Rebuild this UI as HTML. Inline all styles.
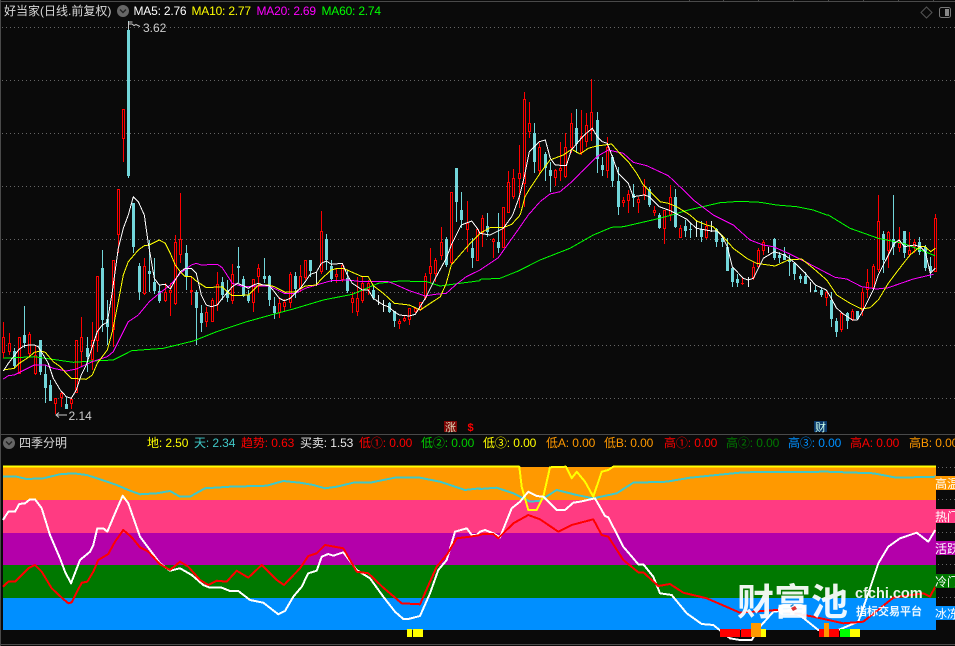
<!DOCTYPE html>
<html lang="zh"><head><meta charset="utf-8"><title>四季分明</title>
<style>
html,body{margin:0;padding:0;background:#0a0a0a;width:955px;height:646px;overflow:hidden}
svg{display:block;position:absolute;left:0;top:0}
text{font-family:"Liberation Sans","Noto Sans CJK SC",sans-serif;font-size:12px}
</style></head><body>
<svg id="s" width="955" height="646" viewBox="0 0 955 646" xmlns="http://www.w3.org/2000/svg">
<rect width="955" height="646" fill="#0a0a0a"/>
<g id="grid" stroke="#666" stroke-dasharray="1 3" shape-rendering="crispEdges">
<path d="M2 27.5H955M2 80.5H955M2 133.5H955M2 186.5H955M2 239.5H955M2 292.5H955M2 345.5H955M2 398.5H955"/>
<path d="M938 467.5H955M938 499.5H955M938 532.5H955M938 564.5H955M938 597.5H955"/>
</g>
<path d="M0 1.5H955M689.5 0V1M723.5 0V1M758.5 0V1M793.5 0V1M828.5 0V1M863.5 0V1M898.5 0V1M933.5 0V1M.5 0V646M0 434.5H955M0 644.5H955" stroke="#4a4a4a" fill="none" shape-rendering="crispEdges"/>
<g id="candles" shape-rendering="crispEdges"></g>
<g id="up" fill="none" stroke-width="1" shape-rendering="crispEdges"></g>

<text x="4" y="15" fill="#d8d8d8">好当家(日线.前复权)</text>
<circle cx="123" cy="11" r="6" fill="#666"/><path d="M120 9.5l3 3 3-3" stroke="#222" stroke-width="1.4" fill="none"/>
<g style="letter-spacing:-.2px">
<text x="133.5" y="15" fill="#fff">MA5: 2.76</text>
<text x="191.5" y="15" fill="#ff0">MA10: 2.77</text>
<text x="256.5" y="15" fill="#f0f">MA20: 2.69</text>
<text x="321.5" y="15" fill="#0f0">MA60: 2.74</text>
</g>
<path d="M926.5 7l5.500 5.500-5.500 5.500-5.500-5.500z" fill="none" stroke="#555"/>
<rect x="939.500" y="7.500" width="11" height="10" rx="2" fill="#0a0a0a" stroke="#777"/><rect x="945" y="9" width="4" height="7" fill="#888"/>
<path d="M128.500 29V22h4M129 24h3l2 1.500 2-1 4 2" stroke="#ccc" fill="none"/>
<text x="143" y="32" fill="#ccc">3.62</text>
<path d="M67 415H56M59 412.500l-3 2.500 3 2.500" stroke="#ccc" fill="none"/>
<text x="68.500" y="420" fill="#ccc">2.14</text>
<rect x="444" y="421" width="13" height="11" fill="#7d0505"/>
<text x="445" y="431" fill="#ddb" style="font-size:11px">涨</text>
<text x="467.500" y="431" fill="#f00" style="font-size:11px;font-weight:bold">$</text>
<rect x="814" y="421" width="13" height="11" fill="#0b3a6c"/>
<text x="815" y="431" fill="#cfe" style="font-size:11px">财</text>

<circle cx="9" cy="443" r="6" fill="#666"/><path d="M6 441.500l3 3 3-3" stroke="#222" stroke-width="1.400" fill="none"/>
<text x="19" y="447" fill="#d8d8d8">四季分明</text>
<text y="447" style="letter-spacing:-.1px">
<tspan x="147" fill="#ff0">地: 2.50</tspan>
<tspan x="194" fill="#40c8c8">天: 2.34</tspan>
<tspan x="241" fill="#f00">趋势: 0.63</tspan>
<tspan x="300" fill="#e8e8e8">买卖: 1.53</tspan>
<tspan x="359" fill="#f00">低①: 0.00</tspan>
<tspan x="421" fill="#0c0">低②: 0.00</tspan>
<tspan x="483" fill="#ff0">低③: 0.00</tspan>
<tspan x="546" fill="#f90">低A: 0.00</tspan>
<tspan x="604" fill="#f90">低B: 0.00</tspan>
<tspan x="664" fill="#f00">高①: 0.00</tspan>
<tspan x="726" fill="#007800">高②: 0.00</tspan>
<tspan x="788" fill="#0090ff">高③: 0.00</tspan>
<tspan x="850" fill="#f00">高A: 0.00</tspan>
<tspan x="909" fill="#f90">高B: 0.00</tspan>
</text>

<g shape-rendering="crispEdges">
<rect x="3" y="467" width="933" height="33" fill="#ff9900"/>
<rect x="3" y="500" width="933" height="33" fill="#ff3b82"/>
<rect x="3" y="533" width="933" height="32" fill="#b400aa"/>
<rect x="3" y="565" width="933" height="33" fill="#007800"/>
<rect x="3" y="598" width="933" height="32" fill="#008fff"/>
</g>
<g id="low" fill="none" stroke-width="2" stroke-linejoin="round" shape-rendering="crispEdges"></g>
<g shape-rendering="crispEdges">
<rect x="407" y="629" width="5" height="8" fill="#ff0"/><rect x="413" y="629" width="10" height="8" fill="#ff0"/>
<rect x="720" y="629" width="20" height="8" fill="#f00"/><rect x="741" y="629" width="10" height="8" fill="#f00"/>
<rect x="751" y="623" width="10" height="14" fill="#f90"/><rect x="761" y="629" width="5" height="8" fill="#ff0"/>
<rect x="819" y="629" width="5" height="8" fill="#f00"/><rect x="824" y="623" width="5" height="14" fill="#f90"/>
<rect x="829" y="629" width="10" height="8" fill="#f00"/><rect x="840" y="629" width="10" height="8" fill="#0f0"/><rect x="850" y="629" width="10" height="8" fill="#ff0"/>
</g>
<g shape-rendering="crispEdges">
<rect x="935" y="476" width="20" height="14" fill="#ff9900"/>
<rect x="935" y="509" width="20" height="14" fill="#ff3b82"/>
<rect x="935" y="541" width="20" height="14" fill="#b400aa"/>
<rect x="935" y="574" width="20" height="14" fill="#007800"/>
<rect x="935" y="606" width="20" height="14" fill="#008fff"/>
</g>
<g fill="#fff">
<text x="935" y="488">高温</text>
<text x="935" y="521">热门</text>
<text x="935" y="553">活跃</text>
<text x="935" y="586">冷门</text>
<text x="935" y="618">冰冻</text>
</g>
<g fill="#fff" fill-opacity=".93">
<rect x="778" y="604" width="28" height="11" rx="5.500"/>
<text x="737" y="615" style="font-size:37px;font-weight:bold">财富池</text>
<text x="855" y="598" style="font-size:14.500px;font-weight:bold">cfchi.com</text>
<text x="856" y="615" style="font-size:11px;font-weight:bold">指标交易平台</text>
</g>
<path d="M791 608l4-2 2 3-4 2z" fill="#d33"/><path d="M790 606l3-2 1 1-3 2z" fill="#28c"/>
</svg>
<script>
var NS="http://www.w3.org/2000/svg";
function el(p,t,a){var e=document.createElementNS(NS,t);for(var k in a)e.setAttribute(k,a[k]);p.appendChild(e);return e}
/* candles: hi, top, bottom, lo, type r=hollow red c=cyan */
var C="322,337,353,358,r 333,343,352,355,r 348,351,366,368,c 337,337,374,374,r 306,335,343,348,c 332,334,354,357,r 345,355,374,375,r 340,340,372,375,c 365,374,388,403,c 380,385,401,401,c 398,398,404,414,r 392,393,398,407,r 397,404,409,409,c 397,399,404,409,r 340,340,393,393,r 317,337,352,366,r 337,348,357,372,c 322,340,360,370,r 276,276,341,352,r 250,268,320,332,c 300,319,327,345,c 260,260,330,347,r 189,189,235,253,r 109,109,139,162,r 21,30,176,178,c 203,203,247,253,c 263,266,292,300,c 258,266,294,295,r 240,271,274,292,c 258,282,291,294,c 285,291,301,303,c 283,292,301,302,r 283,290,293,316,r 235,242,304,305,r 193,239,255,263,r 245,253,277,290,c 276,290,292,305,r 290,292,308,345,c 305,313,323,332,c 307,312,322,327,r 298,300,322,322,r 272,284,305,311,r 277,282,295,300,c 280,290,298,302,c 264,274,301,304,r 247,266,268,283,c 276,279,296,297,c 290,295,301,303,c 279,279,303,312,r 264,268,277,293,r 258,276,279,283,c 275,276,300,306,c 297,306,313,319,c 297,303,313,318,r 299,302,307,312,r 272,274,303,308,r 272,276,289,298,c 265,276,289,292,r 260,260,278,280,r 260,260,271,277,c 272,272,286,286,w 211,231,272,274,r 234,239,260,270,c 260,266,279,282,c 268,274,277,283,r 263,265,280,282,r 270,278,291,293,c 292,298,303,313,r 277,298,312,316,r 277,283,301,303,r 280,283,290,295,r 285,290,298,300,c 295,295,305,305,w 300,300,312,312,w 302,303,312,313,c 311,311,321,327,c 319,321,324,329,r 315,318,321,322,r 308,308,320,325,r 307,308,312,313,r 302,302,310,311,r 273,276,298,300,r 248,266,274,283,r 258,260,274,282,r 227,242,256,260,r 237,239,265,267,c 192,192,263,265,r 168,168,202,222,c 192,210,220,228,c 201,223,230,252,r 238,248,258,268,c 229,229,261,261,r 215,218,233,247,r 213,226,232,237,c 238,239,242,258,r 213,242,248,253,c 207,207,248,248,r 171,182,213,213,r 169,178,197,199,r 145,173,179,208,r 92,99,184,207,r 102,123,132,138,r 123,133,162,173,c 143,147,171,175,r 152,154,168,181,c 162,170,176,192,c 169,170,178,186,r 142,168,171,181,r 133,147,177,178,r 113,123,148,153,r 109,128,144,153,c 110,136,153,155,r 113,125,142,147,r 79,112,131,141,r 112,120,159,173,c 157,165,170,176,c 137,147,171,178,r 155,157,181,187,c 167,181,207,215,c 197,200,203,207,r 190,194,201,213,r 184,194,198,207,c 197,199,203,213,r 179,186,195,200,r 187,189,205,207,c 206,210,213,216,r 213,215,228,229,c 210,210,229,244,r 185,197,215,221,r 189,197,227,228,c 225,228,238,238,r 220,226,231,237,c 223,229,230,238,c 220,229,230,237,w 221,229,237,242,c 221,226,238,239,r 221,221,232,232,w 228,229,242,247,c 235,238,242,247,c 238,247,271,271,c 267,268,282,287,c 274,279,283,287,c 277,283,284,285,r 277,277,287,287,w 262,267,278,280,r 248,250,267,268,r 240,242,251,255,r 247,247,253,253,w 238,239,258,260,c 252,255,258,263,c 247,254,260,260,c 255,260,262,276,c 262,263,274,280,c 274,276,279,283,c 272,276,284,284,c 282,282,292,292,w 286,290,292,292,c 288,290,295,297,c 290,292,298,306,r 292,300,319,327,c 318,321,332,337,c 312,313,330,332,r 312,313,321,329,c 309,311,320,321,r 311,311,319,320,c 288,292,311,316,r 269,282,290,298,r 264,266,289,290,r 195,221,270,272,r 231,234,260,273,c 231,232,251,268,r 195,239,247,255,c 227,243,248,252,r 231,231,253,258,c 232,250,255,257,r 239,242,247,253,r 237,242,252,255,c 245,247,268,271,c 257,266,271,278,c 214,218,272,272,r".split(" ");
var cg=document.getElementById("candles"),CY="#72d6da";
C.forEach(function(s,i){var a=s.split(","),x=Math.round(3.33+5.205*i),h=+a[0],t=+a[1],b=+a[2],l=+a[3],k=a[4];
 var col=k=="r"?"#f00":(k=="w"?"#dfeeee":CY);
 el(cg,"rect",{x:x,y:h,width:1,height:Math.max(l-h,1),fill:col});
 if(k=="w")return;
 if(k=="c")el(cg,"rect",{x:x-1,y:t,width:3,height:Math.max(b-t,1),fill:CY});
 else{el(cg,"rect",{x:x-1,y:t,width:3,height:Math.max(b-t,1),fill:"#f00"});if(b-t>2)el(cg,"rect",{x:x,y:t+1,width:1,height:b-t-2,fill:"#0a0a0a"});}
});
function line(g,col,segs,w){var o=[];segs.forEach(function(sg){sg[2].trim().split(/\s+/).forEach(function(p){var q=p.split(",");o.push((sg[0]+q[0]/3).toFixed(1)+","+(sg[1]+q[1]/3).toFixed(1))})});
 var at={points:o.join(" "),stroke:col};if(w)at["stroke-width"]=w;el(g,"polyline",at)}
var u=document.getElementById("up");
line(u,"#0f0",[[0,215,"10,430 103,425 136,430 220,442 277,438 340,435 395,407 490,400 580,378 650,350 740,320 820,298 880,282 970,255 1057,238 1135,205 1200,198 1280,200 1320,213 1380,205 1440,197"],[480,215,"0,193 60,190 115,168 180,135 270,100 340,60 395,37 430,35 530,12 575,0"],[480,0,"625,630 720,608 780,604 840,607 890,615 950,620 1000,630 1040,645"],[480,215,"1045,0 1110,40 1195,70 1270,85 1365,122"]]);
line(u,"#f0f",[[0,215,"10,492 25,482 43,480 103,450 136,450 160,460 199,468 229,462 277,440 322,425 340,410 370,350 385,320 415,300 448,260 478,235 511,210 541,175 574,150 589,145 604,150 652,148 667,158 697,205 730,215 775,213 808,213 853,235 886,235 916,220 949,210 994,197 1042,195 1087,200 1165,200 1183,207 1228,227 1276,243 1306,238 1339,235 1369,208 1399,185 1440,165"],[480,215,"55,128 110,50 145,0"],[480,0,"180,605 210,582 240,575 270,550 300,520 350,470 385,450 430,460 460,487 500,497 565,527 600,560 640,600 700,645"],[480,215,"760,30 810,75 850,90 880,95 925,115 985,145 1065,187 1100,192 1145,215 1190,222 1225,218 1300,192 1360,178"]]);
line(u,"#ff0",[[0,215,"10,465 43,460 58,445 88,425 103,412 121,408 136,412 160,440 181,455 199,475 214,490 259,493 277,480 292,445 322,405 337,350 355,260 370,180 385,140 415,105 433,92 448,90 478,75 496,85 511,115 526,150 541,170 556,185 574,185 589,198 619,218 667,215 682,230 697,242 745,240 760,225 775,210 805,210 823,215 856,232 886,230 916,213 949,210 964,192 994,165 1012,160 1030,160 1057,172 1087,185 1105,185 1120,212 1150,235 1183,265 1228,270 1261,285 1291,265 1321,245 1339,205 1354,150 1384,115 1415,80 1440,55"],[480,215,"30,38 70,38 95,28 118,3"],[480,0,"122,640 135,590 150,565 180,520 210,480 250,465 275,448 300,462 325,445 350,438 395,432 415,455 445,485 470,520 490,555 520,585 540,605 565,610 590,620 630,645"],[480,215,"650,18 680,30 700,35 725,60 760,100 800,130 830,145 850,148 885,153 925,135 965,132 1000,160 1040,195 1070,240 1110,265 1145,282 1170,278 1195,255 1225,205 1255,165 1290,120 1320,95 1335,95 1352,110 1366,100"]]);
line(u,"#fff",[[0,215,"10,468 25,445 43,422 58,402 73,392 88,390 103,390 115,395 130,420 145,445 160,490 181,525 199,545 214,550 229,525 244,480 259,450 277,395 292,350 307,330 322,322 337,230 355,100 370,40 385,0"],[0,0,"400,590 415,605 433,645"],[0,215,"445,85 463,190 478,210 496,208 511,222 526,195 541,170 556,160 574,160 589,175 604,240 619,270 634,275 652,270 667,250 697,215 712,205 730,212 745,220 760,210 775,205 790,210 808,212 823,230 838,250 853,257 871,250 886,235 901,220 916,200 931,178 949,172 964,145 979,138 994,148 1027,145 1042,180 1057,205 1087,225 1105,225 1120,250 1135,260 1150,270 1165,275 1183,290 1198,300 1228,303 1246,298 1276,250 1291,220 1306,190 1339,130 1354,90 1384,30 1415,18 1432,40"],[480,215,"0,55 30,60 70,40 95,5"],[480,0,"100,640 118,590 133,530 148,455 163,440 178,425 196,420 211,475 226,495 259,497 274,450 304,415 319,400 337,385 352,410 367,425 382,430 397,470 415,520 445,550 460,590 493,585 508,590 523,605 538,620 571,632 586,640"],[480,215,"619,12 649,40 694,48 712,48 727,65 742,95 757,155 790,190 805,195 820,190 835,160 850,130 883,110 913,120 928,130 946,145 976,175 1006,210 1039,225 1054,250 1069,278 1087,295 1117,315 1132,315 1147,290 1165,255 1180,225 1195,180 1210,150 1243,85 1258,75 1273,95 1303,90 1321,95 1336,110 1351,175 1366,160"]]);
var g=document.getElementById("low");
line(g,"#40c8c8",[[0,430,"9,140 50,140 80,147 130,145 180,133 220,130 260,135 300,148 350,165 385,180 420,193 470,190 510,183 540,200 570,200 615,175 690,170 800,167 850,153 900,158 940,165 975,175 1010,170 1060,158 1110,158 1190,142 1260,143 1320,155 1395,180 1440,175"],[480,430,"0,177 50,173 100,190 150,215 180,212 230,180 290,195 340,205 410,190 460,158 560,155 630,143 790,127 1040,125 1180,130 1250,143 1368,140"]]);
line(g,"#ff0",[[0,430,"9,110 1440,110"],[480,430,"118,110 125,170 145,240 170,240 190,200 210,112 258,110 275,145 290,125 315,155 340,200 365,125 385,120 400,110 1368,110"]]);
line(g,"#fff",[[0,430,"9,270 25,245 45,245 58,222 75,220 90,208 105,208 125,235 150,315 180,385 195,425 213,460 240,390 270,365 280,345 292,295 310,295 322,305 345,250 368,197 385,220 420,320 480,400 510,422 540,415 575,435 610,465 630,473 665,473 690,483 715,483 750,510 790,518 835,553 855,543 880,500 905,470 925,430 950,422 965,380 985,372 1000,377 1030,367 1070,420 1110,445 1150,500 1185,545 1210,567 1225,567 1260,558 1290,490 1315,420 1340,390 1365,305 1400,295 1415,315 1430,315 1440,305"],[480,430,"15,300 40,310 60,322 95,235 120,215 145,185 170,198 190,200 230,240 255,240 280,218 300,215 345,205 375,258 385,262 430,350 475,403 490,403 520,440 540,490 575,495 620,550 665,582 700,585 750,625 780,630 815,630 840,590 880,545 930,540 965,560 1015,600 1075,600 1135,575 1165,490 1195,400 1225,350 1260,325 1310,308 1345,335 1366,300"]]);
line(g,"#f00",[[0,430,"9,470 25,455 45,455 65,435 85,415 105,405 125,425 155,475 185,503 205,520 215,517 245,458 262,455 280,425 295,390 325,372 345,335 370,300 395,322 420,352 445,365 480,403 510,420 540,395 565,410 600,450 625,465 650,452 680,455 710,422 745,443 785,405 830,450 852,465 900,415 925,378 950,370 975,345 1030,355 1070,425 1105,430 1150,473 1205,520 1260,523 1310,410 1340,375 1370,325 1410,320 1440,315"],[480,430,"0,313 40,312 55,325 100,280 145,255 180,268 235,305 275,285 340,268 365,315 385,320 430,390 475,427 490,427 535,468 570,462 610,488 680,505 780,548 890,540 1000,560 1090,580 1150,575 1240,503 1330,490 1350,500 1366,470"]]);
</script>
</body></html>
